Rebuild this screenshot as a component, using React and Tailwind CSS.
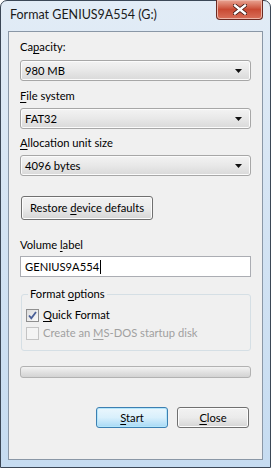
import { useState } from "react";

const font = { fontFamily: 'Lato, "Noto Sans", sans-serif' };

function Key({ children }) {
  return <span className="underline underline-offset-2">{children}</span>;
}

function Select({ value }) {
  return (
    <div className="flex h-[21px] items-center justify-between rounded-[3px] border border-[#a7a7a7] bg-gradient-to-b from-[#f3f3f3] via-[#e8e8e8] to-[#d9d9d9] pl-[4px] pr-[8px] shadow-[inset_0_0_0_1px_#fbfbfb]">
      <span>{value}</span>
      <svg width="7" height="4" viewBox="0 0 7 4">
        <path d="M0 0h7L3.5 4z" fill="#111" />
      </svg>
    </div>
  );
}

function Button({ children, className = "", focused = false }) {
  return (
    <div
      className={
        "flex items-center justify-center rounded-[3px] border " +
        (focused
          ? "border-[#3c7fb1] bg-gradient-to-b from-[#eaf6fd] via-[#d9f0fc] to-[#a7d9f5] shadow-[inset_0_0_0_1px_#b4e6fb]"
          : "border-[#707070] bg-gradient-to-b from-[#f2f2f2] via-[#ebebeb] to-[#d5d5d5] shadow-[inset_0_0_0_1px_#fcfcfc]") +
        " " +
        className
      }
    >
      <span>{children}</span>
    </div>
  );
}

export default function App() {
  const [quick, setQuick] = useState(true);

  return (
    <div style={font} className="h-[468px] w-[271px] bg-white text-[11.2px] leading-[16px] text-black">
      <div className="flex h-[468px] w-[271px] flex-col rounded-t-[7px] border border-[#3b4756] bg-gradient-to-b from-[#e2ecf6] via-[#d3e3f3] to-[#c6dcf1] px-[7px] pb-[7px]">
        {/* title bar */}
        <div className="flex h-[30px] items-start justify-between">
          <div className="pl-[2px] pt-[6px] text-[12.5px] text-[#1a1a1a]">Format GENIUS9A554 (G:)</div>
          <div className="-mt-px flex h-[20px] w-[47px] items-center justify-center rounded-b-[4px] border border-t-0 border-[#6b2a22] bg-gradient-to-b from-[#e8a493] via-[#c94a33] to-[#d8705a] shadow-[inset_0_0_0_1px_#eeb6a8]">
            <svg width="14" height="11" viewBox="0 0 14 11">
              <path d="M2 1.5l10 8M12 1.5l-10 8" stroke="#3b1510" strokeWidth="4" strokeLinecap="square" />
              <path d="M2 1.5l10 8M12 1.5l-10 8" stroke="#fff" strokeWidth="2.4" strokeLinecap="square" />
            </svg>
          </div>
        </div>

        {/* client area */}
        <div className="flex flex-1 flex-col border border-[#8a97a6] bg-[#f0f0f0] px-[11px] pt-[7px]">
          <div>
            Ca<Key>p</Key>acity:
          </div>
          <div className="mt-[5px]">
            <Select value="980 MB" />
          </div>

          <div className="mt-[7px]">
            <Key>F</Key>ile system
          </div>
          <div className="mt-[4px]">
            <Select value="FAT32" />
          </div>

          <div className="mt-[6px]">
            <Key>A</Key>llocation unit size
          </div>
          <div className="mt-[4px]">
            <Select value="4096 bytes" />
          </div>

          <div className="mt-[20px] flex">
            <Button className="ml-px h-[24px] w-[132px]">
              Restore <Key>d</Key>evice defaults
            </Button>
          </div>

          <div className="mt-[17px]">
            Volume <Key>l</Key>abel
          </div>
          <div className="mt-[3px] flex h-[21px] items-center border border-[#abadb3] bg-white pl-[4px]">
            GENIUS9A554<span className="ml-px inline-block h-[14px] w-px bg-black" />
          </div>

          {/* group box */}
          <div className="relative mt-[17px] ml-px h-[57px] rounded-[3px] border border-[#d5dfe5]">
            <div className="absolute -top-[9px] left-[6px] bg-[#f0f0f0] px-[2px]">
              Format <Key>o</Key>ptions
            </div>
            <div className="flex flex-col pl-[4px] pt-[12px]">
              <label className="flex items-center gap-[4px]" onClick={() => setQuick(!quick)}>
                <span className="flex h-[13px] w-[13px] items-center justify-center border border-[#8f8f8f] bg-gradient-to-br from-[#dcdcdc] to-[#fbfbfb]">
                  {quick && (
                    <svg width="9" height="9" viewBox="0 0 9 9">
                      <path d="M1 4.5l2.3 2.7L8 1" stroke="#4a5f97" strokeWidth="1.8" fill="none" />
                    </svg>
                  )}
                </span>
                <span>
                  <Key>Q</Key>uick Format
                </span>
              </label>
              <div className="mt-[2px] flex items-center gap-[4px] text-[#a0a0a0]">
                <span className="h-[13px] w-[13px] border border-[#c4c4c4] bg-[#f4f4f4]" />
                <span>
                  Create an <Key>M</Key>S-DOS startup disk
                </span>
              </div>
            </div>
          </div>

          {/* progress bar */}
          <div className="mt-[15px] h-[12px] rounded-[3px] border border-[#b2b2b2] bg-gradient-to-b from-[#f3f3f3] via-[#e2e2e2] to-[#d3d3d3]" />

          <div className="mt-[29px] flex justify-end gap-[9px] pr-[2px]">
            <Button focused className="h-[21px] w-[72px]">
              <Key>S</Key>tart
            </Button>
            <Button className="h-[21px] w-[72px]">
              <Key>C</Key>lose
            </Button>
          </div>
        </div>
      </div>
    </div>
  );
}
